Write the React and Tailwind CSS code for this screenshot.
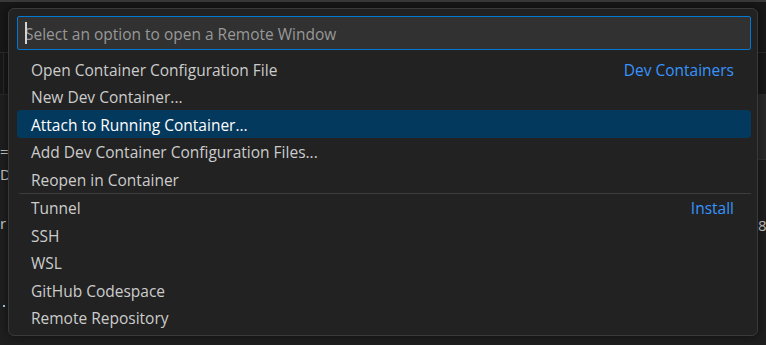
import React from 'react';

const groups = [
  {
    label: 'Dev Containers',
    items: [
      'Open Container Configuration File',
      'New Dev Container...',
      'Attach to Running Container...',
      'Add Dev Container Configuration Files...',
      'Reopen in Container',
    ],
  },
  {
    label: 'Install',
    items: ['Tunnel', 'SSH', 'WSL', 'GitHub Codespace', 'Remote Repository'],
  },
];

const active = 'Attach to Running Container...';

// editor peeking out behind the picker
const Backdrop = () => (
  <div className="flex flex-col w-full h-full bg-[#1f1f1f] text-[15px] leading-none text-[#cccccc]">
    <div className="h-[2px] bg-[#3a3a3a]" />
    <div className="h-[50px] bg-[#181818]" />
    <div className="flex h-[43px] bg-[#181818] border-y border-[#2b2b2b]">
      <div className="w-[3px]" />
      <div className="w-px bg-[#2b2b2b]" />
    </div>
    <div className="flex flex-1">
      <div className="flex flex-col w-[10px] pt-[49px] gap-[8px]">
        <span>=</span>
        <span>D</span>
        <span className="mt-[26px]">r</span>
        <span className="mt-[66px] ml-[3px] w-[2px] h-[2px] bg-[#9cdcfe]" />
      </div>
      <div className="flex-1" />
      <div className="flex flex-col w-[8px]">
        <div className="h-[65px] bg-[#2a2a2a] border-b border-[#333]" />
        <span className="mt-[58px]">8</span>
      </div>
    </div>
  </div>
);

export default function App() {
  return (
    <div
      className="relative w-[766px] h-[345px] overflow-hidden"
      style={{ fontFamily: '"Open Sans", "Noto Sans", sans-serif' }}
    >
      <Backdrop />

      {/* quick pick */}
      <div className="absolute left-[8px] top-[8px] w-[750px] h-[328px] rounded-[6px] border border-[#393939] bg-[#222222] shadow-[0_0_8px_2px_rgba(0,0,0,0.36)] pl-[8px] pr-[6px] pt-[7px]">
        <div className="relative flex items-center h-[34px] rounded-[2px] border border-[#0078d4] bg-[#313131] pl-[7px] pt-[4px]">
          <div className="absolute left-[7px] top-[5px] w-[2px] h-[22px] bg-[#d4d4d4]" />
          <span className="text-[15.5px] text-[#989898]">Select an option to open a Remote Window</span>
        </div>
        <div className="mt-[5px]">
          {groups.map((g, gi) => (
            <div key={g.label} className={gi > 0 ? 'border-t border-[#3c3c3c] ml-[2px]' : ''}>
              {g.items.map((it, i) => (
                <div
                  key={it}
                  className={`flex items-center justify-between h-[27.5px] rounded-[4px] pr-[17px] pt-[3px] text-[15.5px] ${
                    gi > 0 ? 'pl-[12px]' : 'pl-[14px]'
                  } ${it === active ? 'bg-[#04395e] text-white' : 'text-[#cccccc]'}`}
                >
                  <span>{it}</span>
                  {i === 0 && <span className="text-[#3794ff]">{g.label}</span>}
                </div>
              ))}
            </div>
          ))}
        </div>
      </div>
    </div>
  );
}
